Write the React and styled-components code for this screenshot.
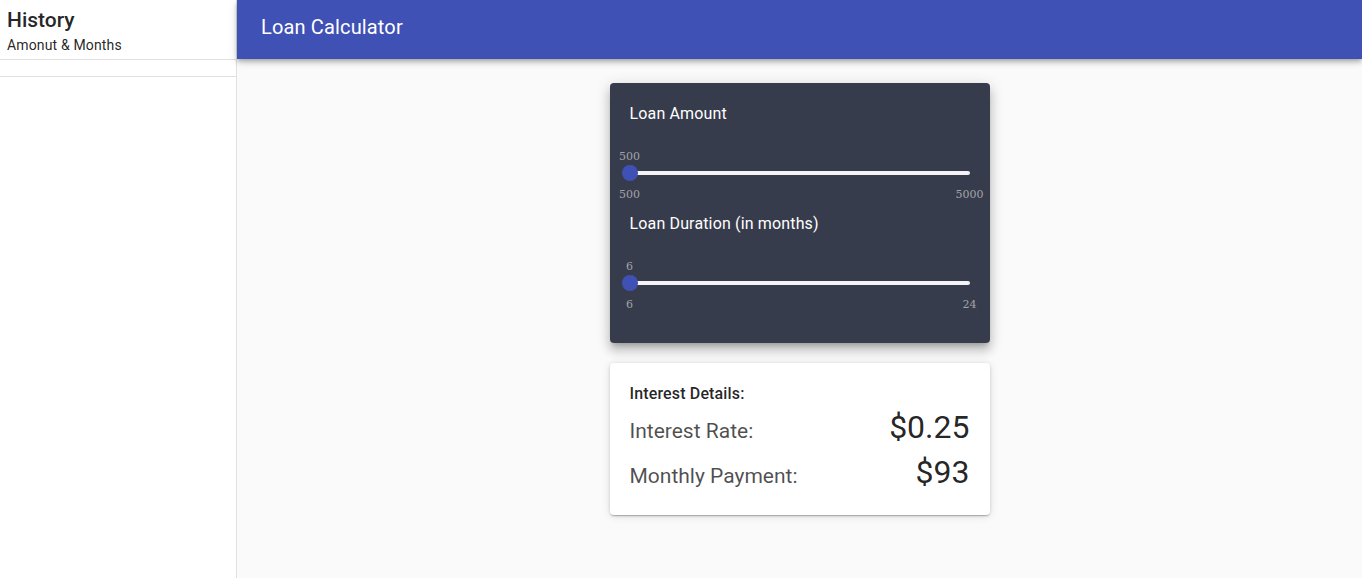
import React from "react";
import styled, { createGlobalStyle } from "styled-components";

const Global = createGlobalStyle`
  html, body { margin: 0; padding: 0; }
  body {
    font-family: Roboto, "Helvetica Neue", Arial, sans-serif;
    background: #fafafa;
    color: rgba(0,0,0,0.87);
  }
  * { box-sizing: border-box; }
`;

const Layout = styled.div`
  display: flex;
  min-height: 100vh;
`;

const Sidebar = styled.aside`
  width: 237px;
  flex: 0 0 237px;
  background: #fff;
  border-right: 1px solid rgba(0,0,0,0.12);
  min-height: 100vh;
`;

const SideHeader = styled.div`
  height: 60px;
  padding: 7px 7px 0;
  border-bottom: 1px solid rgba(0,0,0,0.12);
`;

const SideTitle = styled.div`
  font-size: 21px;
  font-weight: 500;
  line-height: 26px;
  color: rgba(0,0,0,0.87);
`;

const SideSub = styled.div`
  font-size: 14px;
  line-height: 24px;
  letter-spacing: 0.15px;
  color: rgba(0,0,0,0.87);
`;

const SideList = styled.ul`
  list-style: none;
  margin: 0;
  padding: 8px 0;
  border-bottom: 1px solid rgba(0,0,0,0.12);
`;

const Main = styled.main`
  flex: 1;
  display: flex;
  flex-direction: column;
  background: #fafafa;
`;

const AppBar = styled.header`
  height: 59px;
  background: #3f51b5;
  color: #fff;
  display: flex;
  align-items: center;
  padding: 0 24px;
  box-shadow: 0px 2px 4px -1px rgba(0,0,0,0.2), 0px 4px 5px 0px rgba(0,0,0,0.14), 0px 1px 10px 0px rgba(0,0,0,0.12);
  position: relative;
  z-index: 1;
`;

const AppTitle = styled.h1`
  margin: 0;
  font-size: 20px;
  font-weight: 400;
  line-height: 1;
  letter-spacing: 0.15px;
  padding-bottom: 5px;
`;

const Content = styled.div`
  display: flex;
  flex-direction: column;
  align-items: center;
  gap: 20px;
  padding-top: 24px;
`;

const Card = styled.section`
  width: 380px;
  border-radius: 4px;
  background: ${(p) => (p.$dark ? "#373c4c" : "#ffffff")};
  box-shadow: ${(p) =>
    p.$dark
      ? "0px 5px 5px -3px rgba(0,0,0,0.2), 0px 8px 10px 1px rgba(0,0,0,0.14), 0px 3px 14px 2px rgba(0,0,0,0.12)"
      : "0px 2px 1px -1px rgba(0,0,0,0.2), 0px 1px 3px 0px rgba(0,0,0,0.14), 0px 1px 8px 0px rgba(0,0,0,0.12)"};
  padding: ${(p) => (p.$dark ? "21px 20px 32px" : "21px 20px 20px")};
`;

const SliderBlock = styled.div`
  & + & { margin-top: 13px; }
`;

const SliderTitle = styled.div`
  font-size: 16px;
  line-height: 20px;
  letter-spacing: 0.15px;
  color: #fff;
  margin-bottom: 26px;
`;

const ValueRow = styled.div`
  position: relative;
  height: 13px;
`;

const SerifLabel = styled.span`
  font-family: "DejaVu Serif", "Liberation Serif", serif;
  font-size: 11px;
  line-height: 13px;
  color: #a2a4aa;
`;

const ValueLabel = styled(SerifLabel)`
  position: absolute;
  top: 0;
  transform: translateX(-50%);
`;

const Track = styled.div`
  position: relative;
  height: 16px;
  margin-top: 2px;
  display: flex;
  align-items: center;
  &::before {
    content: "";
    display: block;
    width: 100%;
    height: 4px;
    border-radius: 2px;
    background: #f4f4f6;
  }
`;

const Thumb = styled.div`
  position: absolute;
  top: 0;
  width: 16px;
  height: 16px;
  border-radius: 50%;
  background: #3f51b5;
  transform: translateX(-50%);
`;

const Ends = styled.div`
  display: flex;
  justify-content: space-between;
  margin-top: 7px;
  & > span:first-child { transform: translateX(-50%); }
  & > span:last-child { transform: translateX(50%); }
`;

function Slider({ title, min, max, value }) {
  const pct = ((value - min) / (max - min)) * 100;
  return (
    <SliderBlock>
      <SliderTitle>{title}</SliderTitle>
      <ValueRow>
        <ValueLabel style={{ left: `${pct}%` }}>{value}</ValueLabel>
      </ValueRow>
      <Track>
        <Thumb style={{ left: `${pct}%` }} />
      </Track>
      <Ends>
        <SerifLabel>{min}</SerifLabel>
        <SerifLabel>{max}</SerifLabel>
      </Ends>
    </SliderBlock>
  );
}

const DetailsTitle = styled.div`
  font-size: 16px;
  font-weight: 500;
  line-height: 20px;
  letter-spacing: 0.15px;
  color: rgba(0,0,0,0.87);
  margin-bottom: 1px;
`;

const Row = styled.div`
  display: flex;
  justify-content: space-between;
  align-items: baseline;
  line-height: 45px;
  height: 45px;
`;

const RowLabel = styled.span`
  font-size: 21px;
  color: rgba(0,0,0,0.7);
`;

const RowValue = styled.span`
  font-size: 32px;
  color: rgba(0,0,0,0.87);
`;

export default function App() {
  return (
    <>
      <Global />
      <Layout>
        <Sidebar>
          <SideHeader>
            <SideTitle>History</SideTitle>
            <SideSub>Amonut &amp; Months</SideSub>
          </SideHeader>
          <SideList />
        </Sidebar>
        <Main>
          <AppBar>
            <AppTitle>Loan Calculator</AppTitle>
          </AppBar>
          <Content>
            <Card $dark>
              <Slider title="Loan Amount" min={500} max={5000} value={500} />
              <Slider title="Loan Duration (in months)" min={6} max={24} value={6} />
            </Card>
            <Card>
              <DetailsTitle>Interest Details:</DetailsTitle>
              <Row>
                <RowLabel>Interest Rate:</RowLabel>
                <RowValue>$0.25</RowValue>
              </Row>
              <Row>
                <RowLabel>Monthly Payment:</RowLabel>
                <RowValue>$93</RowValue>
              </Row>
            </Card>
          </Content>
        </Main>
      </Layout>
    </>
  );
}
